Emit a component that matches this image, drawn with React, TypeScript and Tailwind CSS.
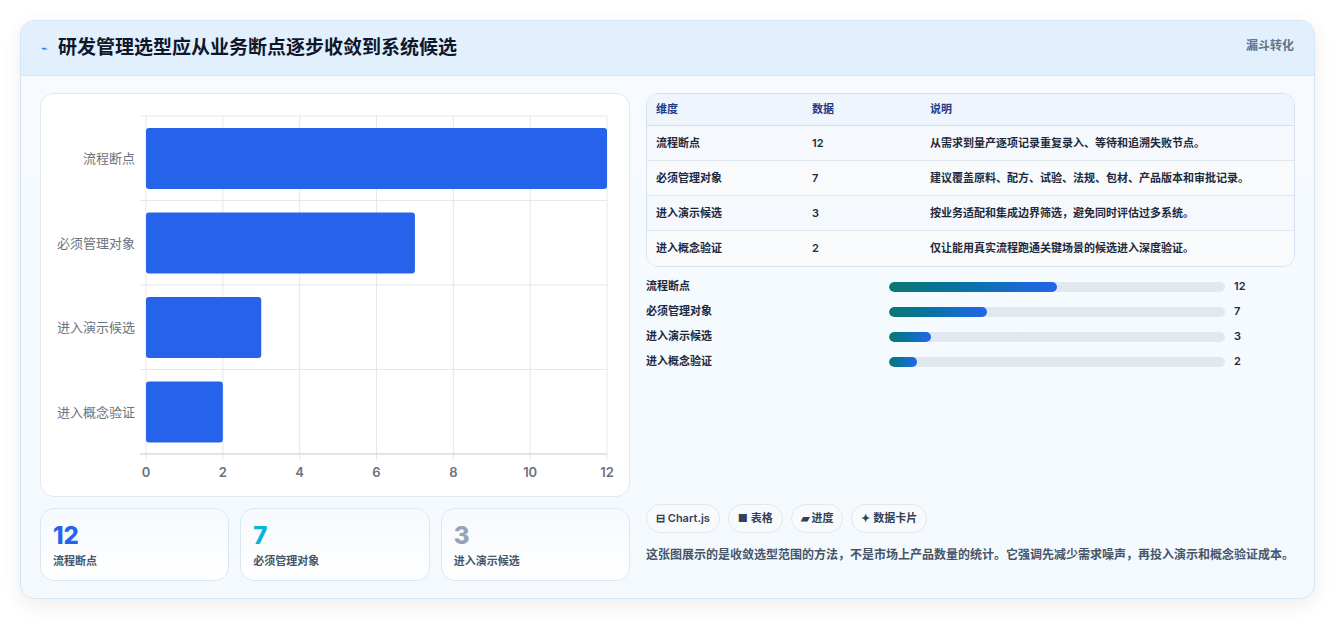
import React from "react";

const rows = [
  { k: "流程断点", v: 12, d: "从需求到量产逐项记录重复录入、等待和追溯失败节点。" },
  { k: "必须管理对象", v: 7, d: "建议覆盖原料、配方、试验、法规、包材、产品版本和审批记录。" },
  { k: "进入演示候选", v: 3, d: "按业务适配和集成边界筛选，避免同时评估过多系统。" },
  { k: "进入概念验证", v: 2, d: "仅让能用真实流程跑通关键场景的候选进入深度验证。" },
];

function Chart() {
  const x0 = 105, x1 = 566, y0 = 22, y1 = 360;
  const rh = (y1 - y0) / 4;
  const sx = (v: number) => x0 + ((x1 - x0) * v) / 12;
  return (
    <svg width="589" height="403" viewBox="0 0 589 403" style={{ fontFamily: "Inter, 'Noto Sans CJK SC', sans-serif" }}>
      {[0, 2, 4, 6, 8, 10, 12].map((t) => (
        <line key={t} x1={sx(t)} x2={sx(t)} y1={y0} y2={y1 + 6} stroke="#e5e7eb" />
      ))}
      {[0, 1, 2, 3, 4].map((i) => (
        <line key={i} x1={x0 - 6} x2={x1} y1={y0 + rh * i} y2={y0 + rh * i} stroke="#e5e7eb" />
      ))}
      <line x1={x0 - 6} x2={x1} y1={y1} y2={y1} stroke="#cbd5e1" />
      {rows.map((r, i) => (
        <g key={r.k}>
          <rect x={x0} y={y0 + rh * i + 12} width={sx(r.v) - x0} height={61} rx={3} fill="#2563eb" />
          <text x={x0 - 11} y={y0 + rh * i + rh / 2 + 5} textAnchor="end" fontSize="13" fill="#6b7280">{r.k}</text>
        </g>
      ))}
      {[0, 2, 4, 6, 8, 10, 12].map((t) => (
        <text key={t} x={sx(t)} y={383} textAnchor="middle" fontSize="13" fontWeight="600" fill="#6b7280">{t}</text>
      ))}
    </svg>
  );
}

export default function App() {
  return (
    <div className="w-[1336px] h-[621px] bg-white pt-[20px] px-[20px]" style={{ fontFamily: "Inter, 'Noto Sans CJK SC', sans-serif" }}>
      <div className="w-[1295px] h-[579px] rounded-[14px] border border-[#d4e6f5] bg-gradient-to-b from-[#f7fbff] to-[#f3f9fd] shadow-[0_6px_20px_rgba(15,23,42,0.08)] overflow-hidden flex flex-col">
        <div className="h-[55px] shrink-0 bg-[#e2f0fd] border-b border-[#d4e6f5] flex items-center justify-between px-[20px]">
          <div className="flex items-center gap-[10px]">
            <span className="text-[#2563eb] text-[11px]">⌁</span>
            <span className="text-[19px] font-bold text-[#0f172a]">研发管理选型应从业务断点逐步收敛到系统候选</span>
          </div>
          <span className="text-[12px] font-semibold text-[#64748b] self-start mt-[16px]">漏斗转化</span>
        </div>
        <div className="flex gap-[16px] px-[19px] pt-[17px]">
          <div className="w-[590px] flex flex-col gap-[11px]">
            <div className="h-[404px] rounded-[14px] border border-[#e2e8f0] bg-white">
              <Chart />
            </div>
            <div className="grid grid-cols-3 gap-[11px]">
              {[
                ["12", "text-[#2563eb]", "流程断点"],
                ["7", "text-[#06b6d4]", "必须管理对象"],
                ["3", "text-[#94a3b8]", "进入演示候选"],
              ].map(([n, c, l]) => (
                <div key={l} className="h-[73px] rounded-[14px] border border-[#dbe7f3] bg-gradient-to-b from-[#f6f9fd] to-white px-[12px] pt-[12px]">
                  <div className={`text-[24px] font-extrabold leading-[30px] ${c}`}>{n}</div>
                  <div className="text-[11px] font-semibold text-[#475569] mt-[2px]">{l}</div>
                </div>
              ))}
            </div>
          </div>
          <div className="w-[652px] flex flex-col">
            <div className="rounded-[12px] border border-[#d5e1ee] bg-white overflow-hidden text-[11px] font-semibold text-[#1e293b]">
              <div className="flex h-[32px] items-center bg-[#eef5fc] border-b border-[#d5e1ee] text-[#1e3a8a]">
                <div className="w-[165px] pl-[9px]">维度</div>
                <div className="w-[118px]">数据</div>
                <div>说明</div>
              </div>
              {rows.map((r, i) => (
                <div key={r.k} className={`flex h-[35px] items-center ${i % 2 ? "bg-[#f8fafc]" : "bg-[#f5f9fd]"} ${i < 3 ? "border-b border-[#e2e8f0]" : ""}`}>
                  <div className="w-[165px] pl-[9px]">{r.k}</div>
                  <div className="w-[118px]">{r.v}</div>
                  <div>{r.d}</div>
                </div>
              ))}
            </div>
            <div className="flex flex-col gap-[10px] mt-[12px] text-[11px] font-semibold text-[#1e293b]">
              {rows.map((r) => (
                <div key={r.k} className="flex items-center h-[15px]">
                  <div className="w-[243px]">{r.k}</div>
                  <div className="w-[336px] h-[10px] rounded-full bg-[#e2e8f0] overflow-hidden">
                    <div className="h-full rounded-full bg-gradient-to-r from-[#0f766e] to-[#2563eb]" style={{ width: `${(r.v / 24) * 100}%` }} />
                  </div>
                  <div className="ml-[9px]">{r.v}</div>
                </div>
              ))}
            </div>
            <div className="flex gap-[8px] mt-[135px] text-[11px] font-semibold text-[#334155]">
              {["⊟ Chart.js", "■ 表格", "▰ 进度", "✦ 数据卡片"].map((c) => (
                <span key={c} className="h-[29px] px-[9px] flex items-center rounded-full border border-[#e2e8f0] bg-[#f8fafc]">{c}</span>
              ))}
            </div>
            <p className="mt-[12px] text-[12px] leading-[20px] font-semibold text-[#475569]">
              这张图展示的是收敛选型范围的方法，不是市场上产品数量的统计。它强调先减少需求噪声，再投入演示和概念验证成本。
            </p>
          </div>
        </div>
      </div>
    </div>
  );
}
